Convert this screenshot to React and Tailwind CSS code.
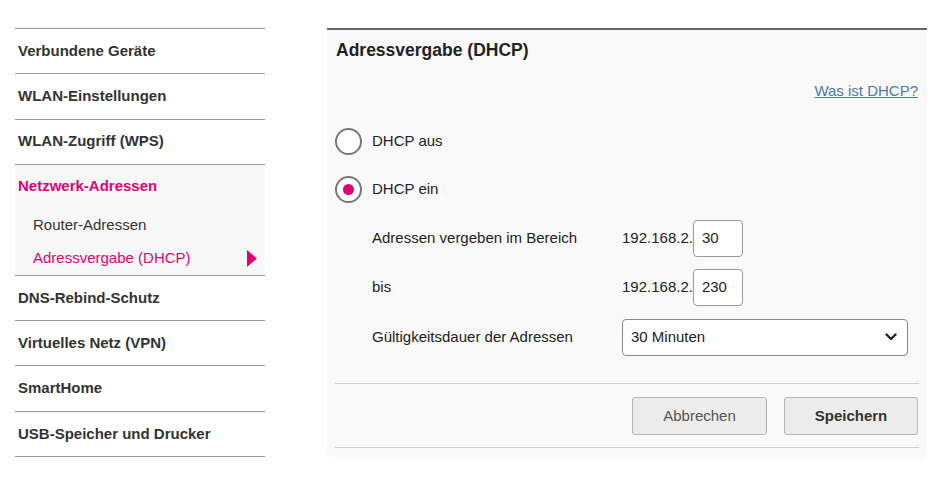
import React from "react";

const font = { fontFamily: '"Liberation Sans", Arial, sans-serif' };

function NavItem({ children }) {
  return (
    <div className="h-[45.3px] border-b border-[#9a9a9a] flex items-center pl-[3px] text-[15px] font-bold text-[#333]">
      {children}
    </div>
  );
}

function Radio({ checked, label }) {
  return (
    <div className="h-[48px] flex items-center">
      <div className="w-[27px] h-[27px] rounded-full border-2 border-[#777] bg-white flex items-center justify-center">
        {checked && <div className="w-[11px] h-[11px] rounded-full bg-[#e20074]" />}
      </div>
      <span className="ml-[10px] text-[15px] text-[#222]">{label}</span>
    </div>
  );
}

function IpRow({ label, value, h }) {
  return (
    <div className={`flex items-center pl-[37px] ${h}`}>
      <div className="w-[250px] text-[15px] text-[#222]">{label}</div>
      <span className="text-[15px] text-[#222]">192.168.2.</span>
      <div className="w-[50px] h-[37px] bg-white border border-[#999] rounded-[4px] flex items-center pl-[8px] text-[15px] text-[#222]">
        {value}
      </div>
    </div>
  );
}

export default function App() {
  return (
    <div style={font} className="w-[952px] h-[500px] bg-white flex pl-[15px] pt-[28px] gap-[62px]">
      <div className="w-[250px] flex flex-col">
        <div className="border-t border-[#9a9a9a]" />
        <NavItem>Verbundene Geräte</NavItem>
        <NavItem>WLAN-Einstellungen</NavItem>
        <NavItem>WLAN-Zugriff (WPS)</NavItem>
        <div className="bg-[#f8f8f8] border-b border-[#9a9a9a]">
          <div className="h-[43px] flex items-center pl-[3px] text-[15px] font-bold text-[#e20074]">
            Netzwerk-Adressen
          </div>
          <div className="h-[34px] flex items-center pl-[18px] text-[15px] text-[#333]">Router-Adressen</div>
          <div className="h-[33px] flex items-center pl-[18px] pr-[8px] text-[15px] text-[#e20074] justify-between">
            <span>Adressvergabe (DHCP)</span>
            <svg width="10" height="17" viewBox="0 0 10 17">
              <polygon points="0,0 10,8.5 0,17" fill="#e20074" />
            </svg>
          </div>
        </div>
        <NavItem>DNS-Rebind-Schutz</NavItem>
        <NavItem>Virtuelles Netz (VPN)</NavItem>
        <NavItem>SmartHome</NavItem>
        <NavItem>USB-Speicher und Drucker</NavItem>
      </div>

      <div className="w-[600px] h-[430px] border-t-2 border-[#666] bg-[#f9f9f9] rounded-b-[8px] px-[8px] flex flex-col">
        <div className="h-[41px] flex items-center pl-px text-[17.5px] font-bold text-[#222]">Adressvergabe (DHCP)</div>
        <div className="h-[41px] flex items-center justify-end pr-px">
          <a className="text-[15px] text-[#4e7aa6] underline cursor-pointer">Was ist DHCP?</a>
        </div>
        <div className="mt-[5px]">
          <Radio label="DHCP aus" />
          <Radio checked label="DHCP ein" />
        </div>
        <div className="mt-px">
          <IpRow label="Adressen vergeben im Bereich" value="30" h="h-[49px]" />
          <IpRow label="bis" value="230" h="h-[49px]" />
          <div className="h-[50px] flex items-center pl-[37px]">
            <div className="w-[250px] text-[15px] text-[#222]">Gültigkeitsdauer der Adressen</div>
            <div className="w-[286px] h-[37px] bg-white border border-[#888] rounded-[4px] flex items-center justify-between pl-[8px] pr-[10px] text-[15px] text-[#222]">
              <span>30 Minuten</span>
              <svg width="12" height="8" viewBox="0 0 12 8">
                <path d="M1.5 1.5 L6 6 L10.5 1.5" fill="none" stroke="#222" strokeWidth="2.4" strokeLinecap="round" strokeLinejoin="round" />
              </svg>
            </div>
          </div>
        </div>
        <div className="mt-[21px] border-t border-[#cfcfcf]" />
        <div className="flex justify-end gap-[17px] pr-px pt-[13px] pb-[12px]">
          <button className="w-[135px] h-[38px] bg-[#ececec] border border-[#b5b5b5] rounded-[3px] text-[15px] text-[#555]">
            Abbrechen
          </button>
          <button className="w-[134px] h-[38px] bg-[#ececec] border border-[#b5b5b5] rounded-[3px] text-[15px] font-bold text-[#333]">
            Speichern
          </button>
        </div>
        <div className="border-t border-[#cfcfcf]" />
      </div>
    </div>
  );
}
